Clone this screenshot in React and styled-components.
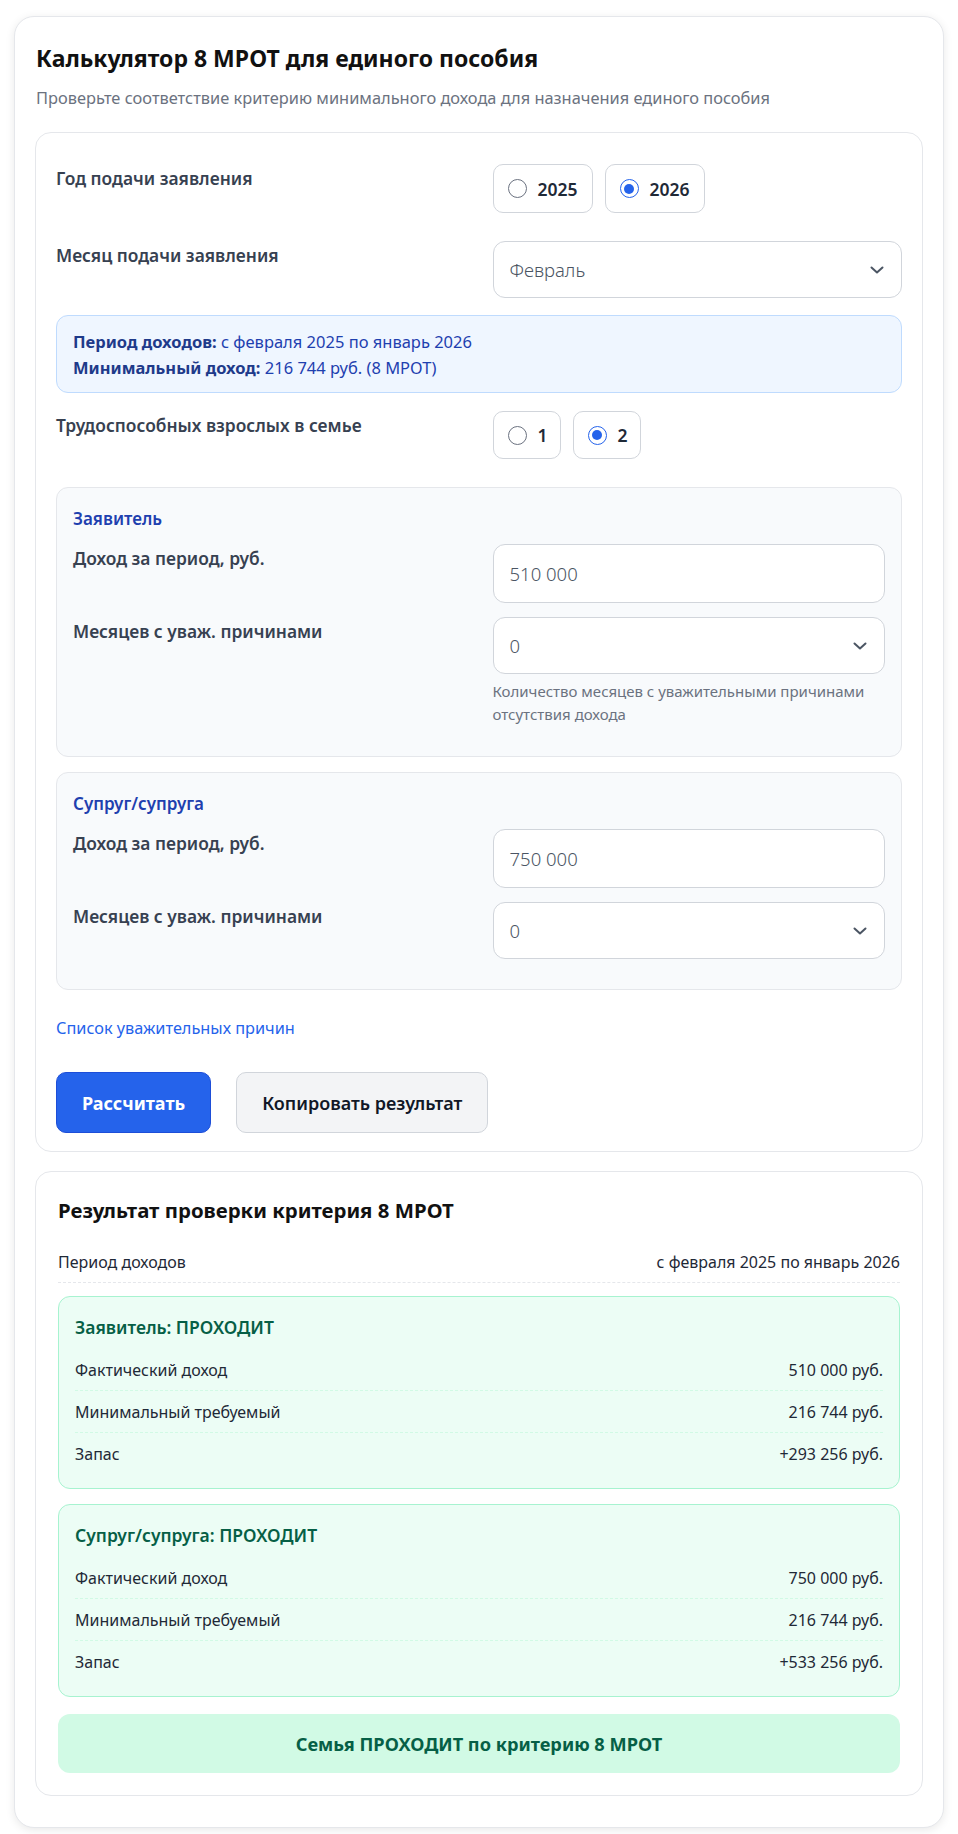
import React from "react";
import styled, { createGlobalStyle } from "styled-components";

const Global = createGlobalStyle`
  * { box-sizing: border-box; }
  html, body { margin: 0; padding: 0; background: #ffffff; }
  body { font-family: "Noto Sans", "Open Sans", sans-serif; color: #111827; }
`;

const Page = styled.div`
  padding: 16px 14px 8px;
`;

const OuterCard = styled.div`
  background: #fff;
  border: 1px solid #e5e7eb;
  border-radius: 20px;
  padding: 25px 20px 31px;
  box-shadow: 0 2px 10px rgba(0, 0, 0, 0.09);
`;

const Title = styled.h1`
  margin: 0 0 12px 1px;
  font-size: 23px;
  line-height: 32px;
  font-weight: 700;
  color: #111;
`;

const Subtitle = styled.p`
  margin: 0 0 22px 1px;
  font-size: 16.4px;
  line-height: 24px;
  color: #6b7280;
`;

const Card = styled.div`
  background: #fff;
  border: 1px solid #e5e7eb;
  border-radius: 16px;
  padding: ${(p) => p.$pad};
`;

const FieldRow = styled.div`
  display: grid;
  grid-template-columns: 1fr 1fr;
  column-gap: 27px;
  align-items: start;
  margin-bottom: ${(p) => p.$mb}px;
`;

const Label = styled.div`
  font-size: 17.4px;
  line-height: 28px;
  font-weight: 600;
  color: #374151;
`;

const RadioGroup = styled.div`
  display: flex;
  gap: 12px;
`;

const RadioBox = styled.label`
  display: flex;
  align-items: center;
  gap: 11px;
  height: ${(p) => p.$h}px;
  padding: 0 ${(p) => p.$pr}px 0 14px;
  border: 1px solid #d1d5db;
  border-radius: 10px;
  background: #fff;
  font-size: 17.5px;
  font-weight: 600;
  color: #1f2937;
`;

const RadioCircle = styled.span`
  width: 19px;
  height: 19px;
  border-radius: 50%;
  border: 1px solid ${(p) => (p.$on ? "#2563eb" : "#6b7280")};
  display: flex;
  align-items: center;
  justify-content: center;
  flex: none;
  &::after {
    content: "";
    width: 10px;
    height: 10px;
    border-radius: 50%;
    background: ${(p) => (p.$on ? "#2563eb" : "transparent")};
  }
`;

const Control = styled.div`
  position: relative;
  height: ${(p) => p.$h}px;
  border: 1px solid #d1d5db;
  border-radius: 12px;
  background: #fff;
  display: flex;
  align-items: center;
  padding: 0 16px;
  font-size: 18.5px;
  font-weight: 300;
  color: #4b5563;
`;

const Chevron = styled.svg`
  position: absolute;
  right: 17px;
  top: 50%;
  margin-top: -4px;
`;

const InfoBox = styled.div`
  background: #eff6ff;
  border: 1px solid #bfdbfe;
  border-radius: 12px;
  padding: 13px 16px 11px;
  font-size: 16.5px;
  line-height: 26px;
  color: #1e40af;
  margin-bottom: 18px;
  b { font-weight: 700; color: #1e3a8a; }
`;

const Section = styled.div`
  background: #f8fafc;
  border: 1px solid #e5e7eb;
  border-radius: 12px;
  padding: 16px 16px 16px;
  margin-bottom: ${(p) => p.$mb}px;
`;

const SectionTitle = styled.div`
  font-size: 17px;
  line-height: 30px;
  font-weight: 600;
  color: #1e40af;
  margin-bottom: 10px;
`;

const Hint = styled.div`
  margin-top: 6px;
  font-size: 15px;
  line-height: 23px;
  color: #6b7280;
`;

const Link = styled.a`
  display: block;
  font-size: 16.3px;
  line-height: 24px;
  color: #2563eb;
  text-decoration: none;
  margin-bottom: 32px;
`;

const Buttons = styled.div`
  display: flex;
  gap: 25px;
`;

const Button = styled.button`
  height: 61px;
  padding: 0 25px;
  border-radius: 10px;
  font-family: inherit;
  font-size: 18px;
  font-weight: ${(p) => (p.$primary ? 700 : 600)};
  color: ${(p) => (p.$primary ? "#fff" : "#111827")};
  background: ${(p) => (p.$primary ? "#2563eb" : "#f3f4f6")};
  border: 1px solid ${(p) => (p.$primary ? "#1d4ed8" : "#d1d5db")};
`;

const ResultsCard = styled.div`
  margin-top: 19px;
  background: #fff;
  border: 1px solid #e5e7eb;
  border-radius: 16px;
  padding: 22px 22px 22px;
`;

const ResultsTitle = styled.h2`
  margin: 0 0 16px;
  font-size: 20.4px;
  line-height: 32px;
  font-weight: 700;
  color: #111;
`;

const PeriodRow = styled.div`
  display: flex;
  justify-content: space-between;
  padding: 8px 0;
  font-size: 16px;
  line-height: 24px;
  color: #1f2937;
  border-bottom: 1px dashed #e5e7eb;
  margin-bottom: 13px;
`;

const PassBox = styled.div`
  background: #ecfdf5;
  border: 1px solid #a7f3d0;
  border-radius: 12px;
  padding: 16px 16px 14px;
  margin-bottom: ${(p) => p.$mb}px;
`;

const PassTitle = styled.div`
  font-size: 17.5px;
  line-height: 28px;
  font-weight: 600;
  color: #065f46;
  margin-bottom: 8px;
`;

const ResRow = styled.div`
  display: flex;
  justify-content: space-between;
  padding: 9px 0 8px;
  font-size: 16px;
  line-height: 24px;
  color: #1f2937;
  border-bottom: 1px dashed #d1fae5;
  &:last-child { border-bottom: none; }
`;

const Banner = styled.div`
  height: 59px;
  border-radius: 12px;
  background: #d1fae5;
  display: flex;
  align-items: center;
  justify-content: center;
  font-size: 18.2px;
  font-weight: 700;
  color: #065f46;
`;

const ChevronIcon = () => (
  <Chevron width="14" height="8" viewBox="0 0 14 8" fill="none">
    <path d="M1.5 1.5 L7 6.5 L12.5 1.5" stroke="#4b5563" strokeWidth="2" strokeLinecap="round" strokeLinejoin="round" />
  </Chevron>
);

const Radio = ({ on, children, pr = 14, h = 49 }) => (
  <RadioBox $pr={pr} $h={h}>
    <RadioCircle $on={on} />
    {children}
  </RadioBox>
);

const Person = ({ title, income, hint, mb }) => (
  <Section $mb={mb}>
    <SectionTitle>{title}</SectionTitle>
    <FieldRow $mb={14}>
      <Label>Доход за период, руб.</Label>
      <Control $h={59}>{income}</Control>
    </FieldRow>
    <FieldRow $mb={14}>
      <Label>Месяцев с уваж. причинами</Label>
      <div>
        <Control $h={57}>
          0
          <ChevronIcon />
        </Control>
        {hint && <Hint>Количество месяцев с уважительными причинами отсутствия дохода</Hint>}
      </div>
    </FieldRow>
  </Section>
);

const PassResult = ({ title, actual, min, margin, mb }) => (
  <PassBox $mb={mb}>
    <PassTitle>{title}</PassTitle>
    <ResRow><span>Фактический доход</span><span>{actual}</span></ResRow>
    <ResRow><span>Минимальный требуемый</span><span>{min}</span></ResRow>
    <ResRow><span>Запас</span><span>{margin}</span></ResRow>
  </PassBox>
);

export default function App() {
  return (
    <Page>
      <Global />
      <OuterCard>
        <Title>Калькулятор 8 МРОТ для единого пособия</Title>
        <Subtitle>Проверьте соответствие критерию минимального дохода для назначения единого пособия</Subtitle>
        <Card $pad="31px 20px 18px">
          <FieldRow $mb={28}>
            <Label>Год подачи заявления</Label>
            <RadioGroup>
              <Radio>2025</Radio>
              <Radio on>2026</Radio>
            </RadioGroup>
          </FieldRow>
          <FieldRow $mb={17}>
            <Label>Месяц подачи заявления</Label>
            <Control $h={57}>
              Февраль
              <ChevronIcon />
            </Control>
          </FieldRow>
          <InfoBox>
            <div><b>Период доходов:</b> с февраля 2025 по январь 2026</div>
            <div><b>Минимальный доход:</b> 216 744 руб. (8 МРОТ)</div>
          </InfoBox>
          <FieldRow $mb={28}>
            <Label>Трудоспособных взрослых в семье</Label>
            <RadioGroup>
              <Radio pr={12} h={48}>1</Radio>
              <Radio on pr={12} h={48}>2</Radio>
            </RadioGroup>
          </FieldRow>
          <Person title="Заявитель" income="510 000" hint mb={15} />
          <Person title="Супруг/супруга" income="750 000" mb={26} />
          <Link href="#">Список уважительных причин</Link>
          <Buttons>
            <Button $primary>Рассчитать</Button>
            <Button>Копировать результат</Button>
          </Buttons>
        </Card>
        <ResultsCard>
          <ResultsTitle>Результат проверки критерия 8 МРОТ</ResultsTitle>
          <PeriodRow>
            <span>Период доходов</span>
            <span>с февраля 2025 по январь 2026</span>
          </PeriodRow>
          <PassResult title="Заявитель: ПРОХОДИТ" actual="510 000 руб." min="216 744 руб." margin="+293 256 руб." mb={15} />
          <PassResult title="Супруг/супруга: ПРОХОДИТ" actual="750 000 руб." min="216 744 руб." margin="+533 256 руб." mb={17} />
          <Banner>Семья ПРОХОДИТ по критерию 8 МРОТ</Banner>
        </ResultsCard>
      </OuterCard>
    </Page>
  );
}
